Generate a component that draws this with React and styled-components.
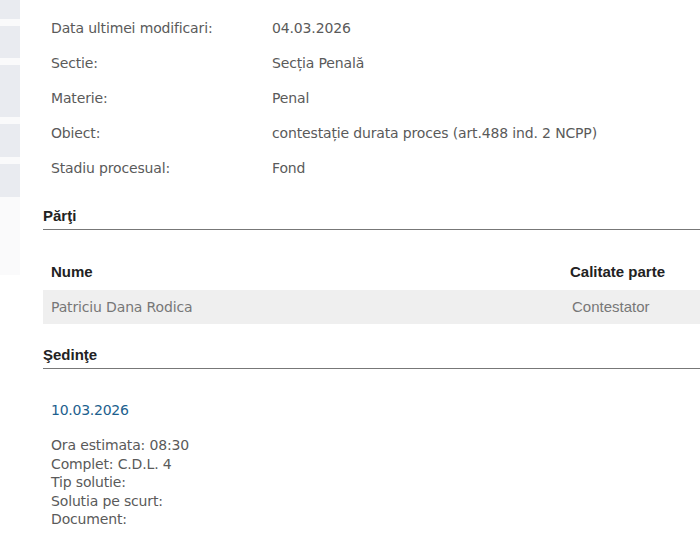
import React from "react";
import styled, { createGlobalStyle } from "styled-components";

const Global = createGlobalStyle`
  html, body { margin: 0; padding: 0; background: #fff; }
  body { width: 700px; height: 540px; overflow: hidden; }
`;

const Page = styled.div`
  display: flex;
  width: 700px;
  height: 540px;
  overflow: hidden;
`;

const Side = styled.div`
  width: 20px;
  flex: none;
  display: flex;
  flex-direction: column;
  gap: 7px;
  height: 275px;
  background: #fafafb;
`;

const Tile = styled.div`
  height: ${(p) => p.$h}px;
  background: #e9ebf0;
`;

const Main = styled.div`
  flex: 1;
  padding-left: 23px;
  display: flex;
  flex-direction: column;
`;

const Info = styled.div`
  display: grid;
  grid-template-columns: 221px 1fr;
  padding: 11px 0 0 8px;
  grid-auto-rows: 35px;
`;

const Tahoma = `"DejaVu Sans", Verdana, sans-serif`;

const Cell = styled.div`
  font-family: ${Tahoma};
  font-size: 14px;
  letter-spacing: -0.15px;
  color: #5a5a5a;
  line-height: 35px;
`;

const SectionTitle = styled.div`
  font-family: "Liberation Sans", Arial, sans-serif;
  font-weight: bold;
  font-size: 15px;
  color: #222;
  margin-top: ${(p) => p.$mt}px;
  padding-bottom: 5px;
  border-bottom: 1px solid #777;
`;

const Table = styled.div`
  margin-top: 23px;
  display: grid;
  grid-template-columns: 519px 1fr;
`;

const Th = styled.div`
  font-family: "Liberation Sans", Arial, sans-serif;
  font-weight: bold;
  font-size: 15px;
  color: #222;
  padding: 10px 0 10px ${(p) => p.$pl}px;
`;

const Td = styled.div`
  background: #efefef;
  font-family: ${(p) => (p.$arial ? `"Liberation Sans", Arial, sans-serif` : Tahoma)};
  font-size: ${(p) => (p.$arial ? 15 : 14)}px;
  letter-spacing: ${(p) => (p.$arial ? 0 : -0.15)}px;
  color: #777;
  height: 34px;
  line-height: 34px;
  padding-left: ${(p) => p.$pl}px;
`;

const Hearing = styled.div`
  padding: 33px 0 0 8px;
  font-family: ${Tahoma};
  font-size: 14px;
  letter-spacing: -0.15px;
`;

const DateLink = styled.div`
  color: #1d5f8e;
  font-size: 14px;
  letter-spacing: -0.25px;
  margin-bottom: 18px;
`;

const Line = styled.div`
  color: #5a5a5a;
  line-height: 18.5px;
`;

const rows = [
  ["Data ultimei modificari:", "04.03.2026"],
  ["Sectie:", "Secția Penală"],
  ["Materie:", "Penal"],
  ["Obiect:", "contestație durata proces (art.488 ind. 2 NCPP)"],
  ["Stadiu procesual:", "Fond"],
];

export default function App() {
  return (
    <Page>
      <Global />
      <Side>
        <Tile $h={19} />
        <Tile $h={32} />
        <Tile $h={52} />
        <Tile $h={33} />
        <Tile $h={33} />
      </Side>
      <Main>
        <Info>
          {rows.map(([k, v]) => (
            <React.Fragment key={k}>
              <Cell>{k}</Cell>
              <Cell>{v}</Cell>
            </React.Fragment>
          ))}
        </Info>
        <SectionTitle $mt={21}>Părţi</SectionTitle>
        <Table>
          <Th $pl={8}>Nume</Th>
          <Th $pl={8}>Calitate parte</Th>
          <Td $pl={8}>Patriciu Dana Rodica</Td>
          <Td $pl={10} $arial>Contestator</Td>
        </Table>
        <SectionTitle $mt={22}>Şedinţe</SectionTitle>
        <Hearing>
          <DateLink>10.03.2026</DateLink>
          <Line>Ora estimata: 08:30</Line>
          <Line>Complet: C.D.L. 4</Line>
          <Line>Tip solutie:</Line>
          <Line>Solutia pe scurt:</Line>
          <Line>Document:</Line>
        </Hearing>
      </Main>
    </Page>
  );
}
